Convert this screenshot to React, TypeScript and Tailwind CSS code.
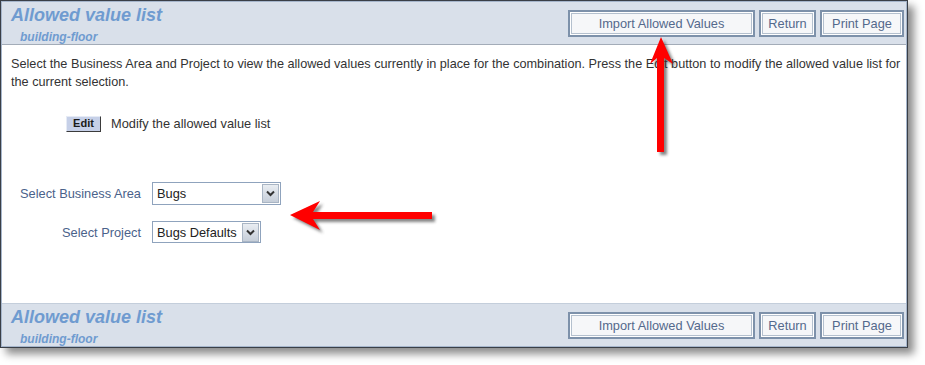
import type { ReactNode } from 'react';

/* ── Allowed value list admin page (annotated screenshot) ── */

const FONT = { fontFamily: '"Liberation Sans", Arial, sans-serif' };

function FrameButton({ children, width }: { children: ReactNode; width: string }) {
  return (
    <button
      className={`${width} h-[27px] border-2 border-[#7d91aa] bg-[#f6f7f9] text-[12.8px] text-[#54698c] shadow-[inset_0_0_0_1px_#ffffff,inset_0_0_0_2px_#b4c0ce]`}
    >
      {children}
    </button>
  );
}

function Band({ bottom }: { bottom?: boolean }) {
  return (
    <div
      className={`flex h-[43px] items-start justify-between bg-[#d9e0ea] ${
        bottom ? 'border-t border-[#c4cedb]' : 'border-b border-[#a3acb8]'
      }`}
    >
      <div className="pl-[9px] pt-[3px]">
        <div className="text-[18px] font-bold italic leading-[20px] text-[#6f9bd0]">
          Allowed value list
        </div>
        <div className="pl-[9px] pt-[5px] text-[12px] font-bold italic leading-[14px] text-[#6f9bd0]">
          building-floor
        </div>
      </div>
      <div className="flex gap-[4px] pr-[2px] pt-[8px]">
        <FrameButton width="w-[187px]">Import Allowed Values</FrameButton>
        <FrameButton width="w-[57px]">Return</FrameButton>
        <FrameButton width="w-[84px]">Print Page</FrameButton>
      </div>
    </div>
  );
}

function Chevron() {
  return (
    <span className="flex h-[19px] w-[17px] items-center justify-center border border-[#a9b5c4] bg-gradient-to-b from-[#e9edf2] to-[#c6ced9]">
      <svg width="9" height="7" viewBox="0 0 9 7">
        <path d="M1 1.5 L4.5 5 L8 1.5" fill="none" stroke="#333" strokeWidth="2" />
      </svg>
    </span>
  );
}

function FakeSelect({ value, width, height }: { value: string; width: string; height: string }) {
  return (
    <div
      className={`${width} ${height} flex items-center justify-between border border-[#8fa3bd] bg-white pl-[4px] pr-[1px]`}
    >
      <span className="text-[12.8px] text-[#222]">{value}</span>
      <Chevron />
    </div>
  );
}

function Arrows() {
  return (
    <svg
      className="pointer-events-none absolute left-0 top-0"
      width="925"
      height="365"
      viewBox="0 0 925 365"
    >
      <defs>
        <filter id="sh" x="-20%" y="-20%" width="140%" height="140%">
          <feGaussianBlur stdDeviation="1.5" />
        </filter>
      </defs>
      {/* up arrow */}
      <g transform="translate(3 3)" filter="url(#sh)" opacity="0.6">
        <polygon points="661,37 673,64 664,58 664,152 657,152 657,58 650,64" fill="#333" />
      </g>
      <polygon points="661,37 673,64 664,58 664,152 657,152 657,58 650,64" fill="#ff0000" />
      {/* left arrow */}
      <g transform="translate(3 3)" filter="url(#sh)" opacity="0.6">
        <polygon points="290,215 320,201 313,212 432,212 432,219 313,219 320,230" fill="#333" />
      </g>
      <polygon points="290,215 320,201 313,212 432,212 432,219 313,219 320,230" fill="#ff0000" />
    </svg>
  );
}

export default function App() {
  return (
    <div className="relative h-[365px] w-[925px] bg-white" style={FONT}>
      <div className="h-[348px] w-[908px] border border-[#3a3f47] shadow-[6px_6px_8px_rgba(0,0,0,0.45)]">
        <div className="flex h-full flex-col border border-[#a6b6cc]">
          <Band />
          <div className="flex-1 bg-white px-[9px]">
            <div className="pt-[10px] text-[12.7px] leading-[18px] text-[#333]">
              <p className="whitespace-nowrap">
                Select the Business Area and Project to view the allowed values currently in place for
                the combination. Press the Edit button to modify the allowed value list for
              </p>
              <p>the current selection.</p>
            </div>
            <div className="mt-[23px] flex items-center gap-[10px] pl-[55px]">
              <span className="flex h-[16px] w-[35px] items-center justify-center border border-b-[#3b3b3b] border-l-[#e6ebf5] border-r-[#3b3b3b] border-t-[#e6ebf5] bg-[#c6d0e8] text-[11px] font-bold text-[#1a1a1a]">
                Edit
              </span>
              <span className="text-[12.8px] text-[#333]">Modify the allowed value list</span>
            </div>
            <div className="mt-[49px] grid grid-cols-[130px_auto] items-center gap-x-[11px] gap-y-[16px]">
              <span className="text-right text-[12.8px] text-[#4a628a]">Select Business Area</span>
              <FakeSelect value="Bugs" width="w-[129px]" height="h-[23px]" />
              <span className="text-right text-[12.8px] text-[#4a628a]">Select Project</span>
              <FakeSelect value="Bugs Defaults" width="w-[109px]" height="h-[22px]" />
            </div>
          </div>
          <Band bottom />
        </div>
      </div>
      <Arrows />
    </div>
  );
}
